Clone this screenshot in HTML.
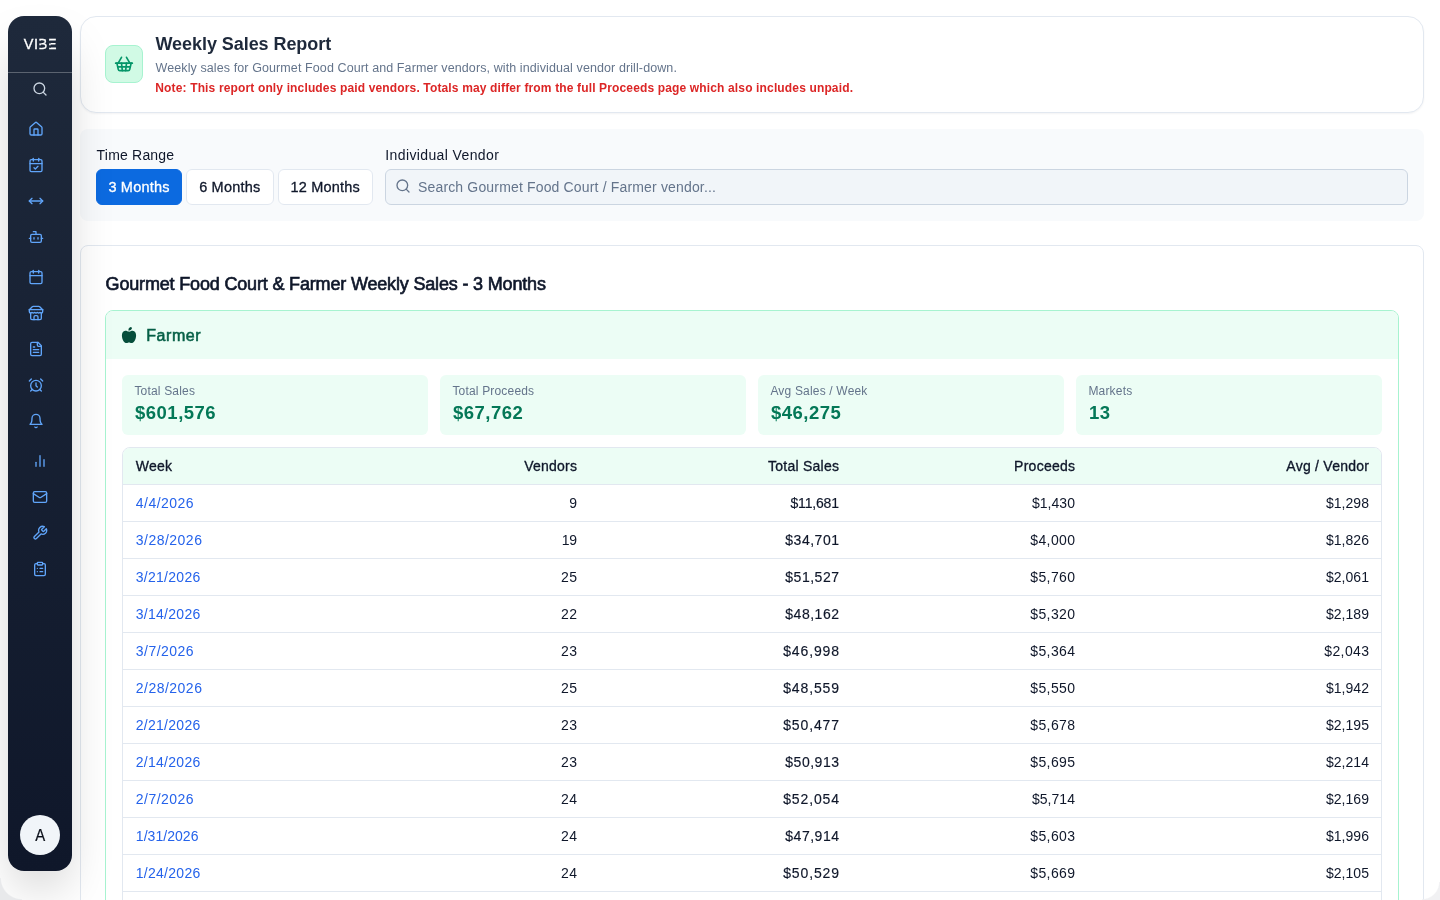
<!DOCTYPE html>
<html lang="en">
<head>
<meta charset="utf-8">
<title>Weekly Sales Report</title>
<style>
*{box-sizing:border-box;margin:0;padding:0}
html,body{width:1440px;height:900px;overflow:hidden}
body{position:relative;background:#fff;font-family:"Liberation Sans",Arial,sans-serif;color:#0f172a;-webkit-font-smoothing:antialiased}
.abs{position:absolute}
.t{position:absolute;white-space:nowrap;line-height:1}
/* sidebar */
.sidebar{z-index:10;position:absolute;left:8px;top:16px;width:64px;height:855px;border-radius:16px;background:linear-gradient(180deg,#1e293b 0%,#0f172a 100%);box-shadow:0 25px 50px -12px rgba(0,0,0,.25)}
.sidebar .divider{position:absolute;left:0;top:56px;width:64px;height:1px;background:rgba(255,255,255,.28)}
.ico{position:absolute;width:16px;height:16px;fill:none;stroke:#60a5fa;stroke-width:2;stroke-linecap:round;stroke-linejoin:round}
.avatar{position:absolute;left:12px;top:799px;width:40px;height:40px;border-radius:50%;background:#f1f5f9;color:#0b0f19;font-size:16.6px;line-height:42px;text-align:center}
.avatar span{display:inline-block;transform:translateX(.6px) scaleX(.9);-webkit-text-stroke:.2px currentColor}
/* header */
.hcard{position:absolute;left:80px;top:16px;width:1344px;height:97px;border:1px solid #e2e8f0;border-radius:16px;background:#fff;box-shadow:0 1px 2px rgba(15,23,42,.05)}
.hicon{position:absolute;left:105px;top:45px;width:38px;height:38px;border-radius:8px;background:#d1fae5;border:1px solid #a7f3d0}
/* filter */
.filter{position:absolute;left:80px;top:129px;width:1344px;height:92px;border-radius:8px;background:#f8fafc}
.btn{position:absolute;top:169px;height:36px;border-radius:6px;border:1px solid #e2e8f0;background:#fff;color:#0f172a;font-size:14.5px;letter-spacing:.2px;line-height:34px;text-align:center;font-weight:400;-webkit-text-stroke:.3px currentColor}
.btn.primary{background:#0c6ae0;border-color:#0c6ae0;color:#fff}
.search{position:absolute;left:385px;top:169px;width:1023px;height:36px;border-radius:6px;border:1px solid #cbd5e1;background:#f1f5f9}
/* main card */
.mcard{position:absolute;left:80px;top:245px;width:1344px;height:700px;border:1px solid #e2e8f0;border-radius:8px;background:#fff}
.farm{position:absolute;left:105px;top:310px;width:1294px;height:640px;border:1px solid #a7f3d0;border-radius:8px;background:#fff;overflow:hidden}
.farm .fhead{position:absolute;left:0;top:0;width:100%;height:48px;background:#ecfdf5}
.stat{position:absolute;top:375px;width:306px;height:60px;border-radius:6px;background:#ecfdf5}
.tbl{position:absolute;left:122px;top:447px;width:1260px;height:500px;border:1px solid #e2e8f0;border-radius:8px;overflow:hidden;background:#fff}
.ph{position:absolute;left:32px;top:0;line-height:34px;font-size:14px;letter-spacing:.16px;color:#64748b;white-space:nowrap}
.med{-webkit-text-stroke:.38px currentColor}
.sl{top:385px;margin-left:.4px;font-size:12px;letter-spacing:.18px;color:#64748b}
.sv{top:404px;margin-left:1px;font-size:18.5px;letter-spacing:.5px;font-weight:700;color:#047857}
table{border-collapse:separate;border-spacing:0;width:1258px;table-layout:fixed;font-size:14px}
th,td{height:37px;padding:0 12px;text-align:right;border-bottom:1px solid #e2e8f0;font-weight:400;color:#0f172a;white-space:nowrap;vertical-align:middle}
th{background:#ecfdf5;font-weight:400;height:37px;letter-spacing:.25px;padding-right:11.75px;-webkit-text-stroke:.32px currentColor}
td{letter-spacing:.2px;padding-right:11.8px}
th.wk,td.wk{text-align:left;padding-left:12.8px}
td.wk a{color:#2563eb}
td.ts{-webkit-text-stroke:.16px currentColor}
</style>
</head>
<body>
<div id="root" style="position:absolute;left:0;top:0;width:1440px;height:900px;will-change:transform">
<div class="sidebar">
<svg class="logo" style="position:absolute;left:0;top:0;transform:translateZ(0)" width="64" height="56" viewBox="0 0 64 56"><text y="33.2" font-family="Liberation Sans, Arial, sans-serif" font-size="14.5" fill="#fff" stroke="#fff" stroke-width=".3"><tspan x="15.8">V</tspan><tspan x="26">I</tspan><tspan x="30.6" textLength="8.7" lengthAdjust="spacingAndGlyphs">B</tspan><tspan x="40.2" textLength="8.2" lengthAdjust="spacingAndGlyphs">E</tspan></text><g fill="#1e293b"><rect x="30.6" y="24.7" width="3" height="2.7"/><rect x="30.6" y="29.3" width="3" height="2.4"/><rect x="40" y="24.7" width="3" height="2.7"/><rect x="40" y="29.3" width="3" height="2.4"/></g></svg>
<div class="divider"></div>
<svg class="ico" style="left:24px;top:65px;stroke:#cbd5e1" viewBox="0 0 24 24"><circle cx="11" cy="11" r="8"/><path d="m21 21-4.3-4.3"/></svg>
<svg class="ico" style="left:20px;top:105px" viewBox="0 0 24 24"><path d="M15 21v-8a1 1 0 0 0-1-1h-4a1 1 0 0 0-1 1v8"/><path d="M3 10a2 2 0 0 1 .709-1.528l7-5.999a2 2 0 0 1 2.582 0l7 5.999A2 2 0 0 1 21 10v9a2 2 0 0 1-2 2H5a2 2 0 0 1-2-2z"/></svg>
<svg class="ico" style="left:20px;top:141px" viewBox="0 0 24 24"><path d="M8 2v4"/><path d="M16 2v4"/><rect width="18" height="18" x="3" y="4" rx="2"/><path d="M3 10h18"/><path d="m9 16 2 2 4-4"/></svg>
<svg class="ico" style="left:20px;top:177px" viewBox="0 0 24 24"><path d="m18 8 4 4-4 4"/><path d="M2 12h20"/><path d="m6 8-4 4 4 4"/></svg>
<svg class="ico" style="left:20px;top:213px" viewBox="0 0 24 24"><path d="M12 8V4H8"/><rect width="16" height="12" x="4" y="8" rx="2"/><path d="M2 14h2"/><path d="M20 14h2"/><path d="M15 13v2"/><path d="M9 13v2"/></svg>
<svg class="ico" style="left:20px;top:253px" viewBox="0 0 24 24"><path d="M8 2v4"/><path d="M16 2v4"/><rect width="18" height="18" x="3" y="4" rx="2"/><path d="M3 10h18"/></svg>
<svg class="ico" style="left:20px;top:289px" viewBox="0 0 24 24"><path d="m2 7 4.41-4.41A2 2 0 0 1 7.83 2h8.34a2 2 0 0 1 1.42.59L22 7"/><path d="M4 12v8a2 2 0 0 0 2 2h12a2 2 0 0 0 2-2v-8"/><path d="M15 22v-4a2 2 0 0 0-2-2h-2a2 2 0 0 0-2 2v4"/><path d="M2 7h20"/><path d="M22 7v3a2 2 0 0 1-2 2a2.7 2.7 0 0 1-1.59-.63.7.7 0 0 0-.82 0A2.7 2.7 0 0 1 16 12a2.7 2.7 0 0 1-1.59-.63.7.7 0 0 0-.82 0A2.7 2.7 0 0 1 12 12a2.7 2.7 0 0 1-1.59-.63.7.7 0 0 0-.82 0A2.7 2.7 0 0 1 8 12a2.7 2.7 0 0 1-1.59-.63.7.7 0 0 0-.82 0A2.7 2.7 0 0 1 4 12a2 2 0 0 1-2-2V7"/></svg>
<svg class="ico" style="left:20px;top:325px" viewBox="0 0 24 24"><path d="M15 2H6a2 2 0 0 0-2 2v16a2 2 0 0 0 2 2h12a2 2 0 0 0 2-2V7Z"/><path d="M14 2v4a2 2 0 0 0 2 2h4"/><path d="M10 9H8"/><path d="M16 13H8"/><path d="M16 17H8"/></svg>
<svg class="ico" style="left:20px;top:361px" viewBox="0 0 24 24"><circle cx="12" cy="13" r="8"/><path d="M12 9v4l2 2"/><path d="M5 3 2 6"/><path d="m22 6-3-3"/><path d="M6.38 18.7 4 21"/><path d="M17.64 18.67 20 21"/></svg>
<svg class="ico" style="left:20px;top:397px" viewBox="0 0 24 24"><path d="M6 8a6 6 0 0 1 12 0c0 7 3 9 3 9H3s3-2 3-9"/><path d="M10.3 21a1.94 1.94 0 0 0 3.4 0"/></svg>
<svg class="ico" style="left:24px;top:437px" viewBox="0 0 24 24"><line x1="18" x2="18" y1="20" y2="10"/><line x1="12" x2="12" y1="20" y2="4"/><line x1="6" x2="6" y1="20" y2="14"/></svg>
<svg class="ico" style="left:24px;top:473px" viewBox="0 0 24 24"><rect width="20" height="16" x="2" y="4" rx="2"/><path d="m22 7-8.97 5.7a1.94 1.94 0 0 1-2.06 0L2 7"/></svg>
<svg class="ico" style="left:24px;top:509px" viewBox="0 0 24 24"><path d="M14.7 6.3a1 1 0 0 0 0 1.4l1.6 1.6a1 1 0 0 0 1.4 0l3.77-3.77a6 6 0 0 1-7.94 7.94l-6.91 6.91a2.12 2.12 0 0 1-3-3l6.91-6.91a6 6 0 0 1 7.94-7.94l-3.76 3.76z"/></svg>
<svg class="ico" style="left:24px;top:545px" viewBox="0 0 24 24"><rect width="8" height="4" x="8" y="2" rx="1" ry="1"/><path d="M16 4h2a2 2 0 0 1 2 2v14a2 2 0 0 1-2 2H6a2 2 0 0 1-2-2V6a2 2 0 0 1 2-2h2"/><path d="M12 11h4"/><path d="M12 16h4"/><path d="M8 11h.01"/><path d="M8 16h.01"/></svg>
<div class="avatar"><span>A</span></div>
</div>

<div class="hcard"></div>
<div class="hicon"><svg width="20" height="20" viewBox="0 0 24 24" fill="none" stroke="#059669" stroke-width="2" stroke-linecap="round" stroke-linejoin="round" style="position:absolute;left:8px;top:8px"><path d="m15 11-1 9"/><path d="m19 11-4-7"/><path d="M2 11h20"/><path d="m3.5 11 1.6 7.4a2 2 0 0 0 2 1.6h9.8a2 2 0 0 0 2-1.6l1.7-7.4"/><path d="M4.5 15.5h15"/><path d="m5 11 4-7"/><path d="m9 11 1 9"/></svg></div>
<div class="t" id="title" style="left:155.5px;top:35px;font-size:18px;font-weight:700;letter-spacing:-.06px;color:#1e293b">Weekly Sales Report</div>
<div class="t" id="sub" style="left:155.5px;top:62px;font-size:12.5px;letter-spacing:.1px;color:#64748b">Weekly sales for Gourmet Food Court and Farmer vendors, with individual vendor drill-down.</div>
<div class="t" id="note" style="left:155.3px;top:82px;font-size:12px;font-weight:700;letter-spacing:.145px;color:#dc2626">Note: This report only includes paid vendors. Totals may differ from the full Proceeds page which also includes unpaid.</div>

<div class="filter"></div>
<div class="t" id="lbl1" class="med" style="left:96.6px;top:148px;font-size:14px;letter-spacing:.2px;color:#0f172a">Time Range</div>
<div class="t" id="lbl2" class="med" style="left:385.3px;top:148px;font-size:14px;letter-spacing:.38px;color:#0f172a">Individual Vendor</div>
<div class="btn primary" style="left:96px;width:86px"><span id="b1">3 Months</span></div>
<div class="btn" style="left:186px;width:87.5px"><span id="b2">6 Months</span></div>
<div class="btn" style="left:278px;width:94.5px"><span id="b3">12 Months</span></div>
<div class="search"><svg width="16" height="16" viewBox="0 0 24 24" fill="none" stroke="#64748b" stroke-width="2" stroke-linecap="round" stroke-linejoin="round" style="position:absolute;left:9px;top:8px"><circle cx="11" cy="11" r="8"/><path d="m21 21-4.3-4.3"/></svg><span class="ph" id="ph">Search Gourmet Food Court / Farmer vendor...</span></div>

<div class="mcard"></div>
<div class="t" id="h2" style="left:105.6px;top:275px;font-size:18px;font-weight:400;-webkit-text-stroke:.65px #0f172a;letter-spacing:-.17px;color:#0f172a">Gourmet Food Court &amp; Farmer Weekly Sales - 3 Months</div>
<div class="farm"><div class="fhead"></div></div>
<svg class="abs" style="left:116px;top:322px" width="30" height="26" viewBox="0 0 30 26"><g fill="#064e3b"><path d="M13 10.1C11.800 9.400 10.600 8.700 9.300 8.800C7 9 5.900 11 5.900 13.400C5.900 17 8 21 10.600 21C11.600 21 12.200 20.500 13 20.500C13.800 20.500 14.400 21 15.400 21C18 21 20.100 17 20.100 13.400C20.100 11 19 9 16.700 8.800C15.400 8.700 14.200 9.400 13 10.100Z"/><ellipse cx="14.200" cy="6.800" rx="2.050" ry="1.250" transform="rotate(-42 14.200 6.800)"/><path d="M12.700 7.600L13.300 10.300L12.700 10.300Z"/></g></svg>
<div class="t" id="farmer" style="left:146.3px;top:328px;font-size:16px;font-weight:400;letter-spacing:.55px;-webkit-text-stroke:.55px #065f46;color:#065f46">Farmer</div>

<div class="stat" style="left:122px"></div><div class="stat" style="left:440px"></div><div class="stat" style="left:758px"></div><div class="stat" style="left:1076px"></div>
<div class="t sl" id="sl1" style="left:134px">Total Sales</div><div class="t sv" id="sv1" style="left:134px">$601,576</div>
<div class="t sl" id="sl2" style="left:452px">Total Proceeds</div><div class="t sv" id="sv2" style="left:452px">$67,762</div>
<div class="t sl" id="sl3" style="left:770px">Avg Sales / Week</div><div class="t sv" id="sv3" style="left:770px">$46,275</div>
<div class="t sl" id="sl4" style="left:1088px">Markets</div><div class="t sv" id="sv4" style="left:1088px">13</div>

<div class="tbl"><table>
<colgroup><col style="width:231px"><col style="width:235px"><col style="width:262px"><col style="width:236px"><col style="width:294px"></colgroup>
<thead><tr><th class="wk">Week</th><th>Vendors</th><th>Total Sales</th><th>Proceeds</th><th>Avg / Vendor</th></tr></thead>
<tbody>
<tr><td class="wk"><a style="letter-spacing:0.47px">4/4/2026</a></td><td style="letter-spacing:0.51px;padding-right:11.49px">9</td><td class="ts" style="letter-spacing:-0.18px;padding-right:12.18px">$11,681</td><td style="letter-spacing:0.06px;padding-right:11.94px">$1,430</td><td style="letter-spacing:0.06px;padding-right:11.94px">$1,298</td></tr>
<tr><td class="wk"><a style="letter-spacing:0.48px">3/28/2026</a></td><td style="letter-spacing:-0.44px;padding-right:12.44px">19</td><td class="ts" style="letter-spacing:0.52px;padding-right:11.48px">$34,701</td><td style="letter-spacing:0.38px;padding-right:11.62px">$4,000</td><td style="letter-spacing:0.06px;padding-right:11.94px">$1,826</td></tr>
<tr><td class="wk"><a style="letter-spacing:0.27px">3/21/2026</a></td><td style="letter-spacing:0.51px;padding-right:11.49px">25</td><td class="ts" style="letter-spacing:0.52px;padding-right:11.48px">$51,527</td><td style="letter-spacing:0.38px;padding-right:11.62px">$5,760</td><td style="letter-spacing:0.06px;padding-right:11.94px">$2,061</td></tr>
<tr><td class="wk"><a style="letter-spacing:0.27px">3/14/2026</a></td><td style="letter-spacing:0.51px;padding-right:11.49px">22</td><td class="ts" style="letter-spacing:0.52px;padding-right:11.48px">$48,162</td><td style="letter-spacing:0.38px;padding-right:11.62px">$5,320</td><td style="letter-spacing:0.06px;padding-right:11.94px">$2,189</td></tr>
<tr><td class="wk"><a style="letter-spacing:0.47px">3/7/2026</a></td><td style="letter-spacing:0.51px;padding-right:11.49px">23</td><td class="ts" style="letter-spacing:0.87px;padding-right:11.13px">$46,998</td><td style="letter-spacing:0.38px;padding-right:11.62px">$5,364</td><td style="letter-spacing:0.38px;padding-right:11.62px">$2,043</td></tr>
<tr><td class="wk"><a style="letter-spacing:0.48px">2/28/2026</a></td><td style="letter-spacing:0.51px;padding-right:11.49px">25</td><td class="ts" style="letter-spacing:0.87px;padding-right:11.13px">$48,559</td><td style="letter-spacing:0.38px;padding-right:11.62px">$5,550</td><td style="letter-spacing:0.06px;padding-right:11.94px">$1,942</td></tr>
<tr><td class="wk"><a style="letter-spacing:0.27px">2/21/2026</a></td><td style="letter-spacing:0.51px;padding-right:11.49px">23</td><td class="ts" style="letter-spacing:0.87px;padding-right:11.13px">$50,477</td><td style="letter-spacing:0.38px;padding-right:11.62px">$5,678</td><td style="letter-spacing:0.06px;padding-right:11.94px">$2,195</td></tr>
<tr><td class="wk"><a style="letter-spacing:0.27px">2/14/2026</a></td><td style="letter-spacing:0.51px;padding-right:11.49px">23</td><td class="ts" style="letter-spacing:0.52px;padding-right:11.48px">$50,913</td><td style="letter-spacing:0.38px;padding-right:11.62px">$5,695</td><td style="letter-spacing:0.06px;padding-right:11.94px">$2,214</td></tr>
<tr><td class="wk"><a style="letter-spacing:0.47px">2/7/2026</a></td><td style="letter-spacing:0.51px;padding-right:11.49px">24</td><td class="ts" style="letter-spacing:0.87px;padding-right:11.13px">$52,054</td><td style="letter-spacing:0.06px;padding-right:11.94px">$5,714</td><td style="letter-spacing:0.06px;padding-right:11.94px">$2,169</td></tr>
<tr><td class="wk"><a style="letter-spacing:0.05px">1/31/2026</a></td><td style="letter-spacing:0.51px;padding-right:11.49px">24</td><td class="ts" style="letter-spacing:0.52px;padding-right:11.48px">$47,914</td><td style="letter-spacing:0.38px;padding-right:11.62px">$5,603</td><td style="letter-spacing:0.06px;padding-right:11.94px">$1,996</td></tr>
<tr><td class="wk"><a style="letter-spacing:0.27px">1/24/2026</a></td><td style="letter-spacing:0.51px;padding-right:11.49px">24</td><td class="ts" style="letter-spacing:0.87px;padding-right:11.13px">$50,529</td><td style="letter-spacing:0.38px;padding-right:11.62px">$5,669</td><td style="letter-spacing:0.06px;padding-right:11.94px">$2,105</td></tr>
</tbody></table></div>
<div class="abs" style="z-index:20;left:0;top:878px;width:22px;height:22px;background:radial-gradient(circle at 100% 0,rgba(232,233,235,0) 20.6px,#e8e9eb 21.8px)"></div>
<div class="abs" style="z-index:20;left:1422px;top:882px;width:18px;height:18px;background:radial-gradient(circle at 0 0,rgba(241,241,243,0) 16.6px,#f1f1f3 17.8px)"></div>
</div>
</body>
</html>
